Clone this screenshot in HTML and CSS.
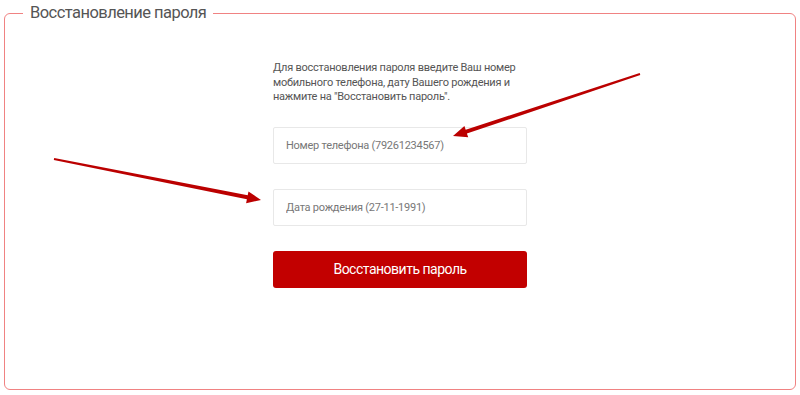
FILE: index.html
```html
<!DOCTYPE html>
<html lang="ru">
<head>
<meta charset="utf-8">
<title>Восстановление пароля</title>
<link rel="stylesheet" href="styles.css">
</head>
<body>
<div class="page">
  <fieldset class="box">
    <legend class="box-title">Восстановление пароля</legend>
    <div class="form">
      <p class="hint">Для восстановления пароля введите Ваш номер мобильного телефона, дату Вашего рождения и нажмите на "Восстановить пароль".</p>
      <input class="field" type="text" placeholder="Номер телефона (79261234567)">
      <input class="field" type="text" placeholder="Дата рождения (27-11-1991)">
      <button class="btn" type="button">Восстановить пароль</button>
    </div>
  </fieldset>
  <svg class="arrows" width="800" height="395" viewBox="0 0 800 395">
    <polygon class="arrow" points="640.3,75 466.9,133.5 468.2,137.3 453,136 464.4,125.9 465.7,129.7 639.7,73.1"/>
    <polygon class="arrow" points="53.8,160 246.9,199.3 246.1,203.2 261,200 248.5,191.4 247.7,195.3 54.2,158"/>
  </svg>
</div>
</body>
</html>
```
FILE: styles.css
```css
html, body {
  margin: 0;
  padding: 0;
  background: #ffffff;
}
body {
  font-family: Roboto, "Liberation Sans", sans-serif;
  width: 800px;
  height: 395px;
  overflow: hidden;
}
.page {
  position: relative;
  padding: 3px 4px 0 4px;
}
.box {
  margin: 0;
  padding: 0;
  border: 1px solid #f08282;
  border-radius: 6px;
  height: 385px;
  box-sizing: content-box;
}
.box-title {
  margin-left: 18px;
  padding: 0 7px;
  font-size: 16.5px;
  letter-spacing: -0.55px;
  line-height: 20px;
  color: #555555;
}
.form {
  width: 254px;
  margin: 0 auto;
  display: flex;
  flex-direction: column;
}
.hint {
  margin: 38px 0 22px 0;
  font-size: 11px;
  letter-spacing: -0.25px;
  line-height: 14.5px;
  color: #555555;
}
.field {
  height: 37px;
  box-sizing: border-box;
  border: 1px solid #e8e8e8;
  border-radius: 2px;
  padding: 0 12px;
  font-family: Roboto, "Liberation Sans", sans-serif;
  font-size: 11px;
  letter-spacing: -0.25px;
  color: #555555;
  margin: 0 0 25px 0;
  outline: none;
}
.field::placeholder {
  color: #777777;
}
.btn {
  height: 37px;
  border: none;
  border-radius: 3px;
  background: #c20000;
  color: #ffffff;
  font-family: Roboto, "Liberation Sans", sans-serif;
  font-size: 14px;
  letter-spacing: -0.5px;
  cursor: pointer;
}
.arrows {
  position: absolute;
  left: 0;
  top: 0;
  pointer-events: none;
}
.arrow {
  fill: #bb0000;
}
```
